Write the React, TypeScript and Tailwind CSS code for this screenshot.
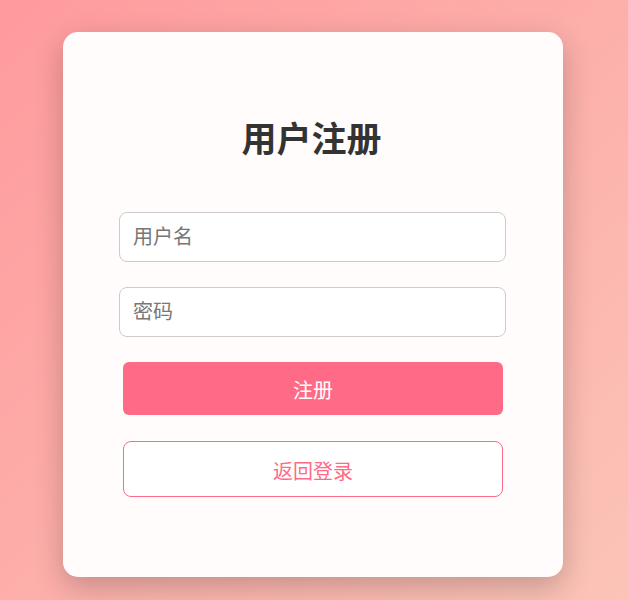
export default function App() {
  return (
    <div
      className="min-h-[600px] w-full pt-[32px] bg-[linear-gradient(135deg,#ff9a9e_0%,#fbc4b6_100%)]"
      style={{ fontFamily: '"Noto Sans CJK SC", "Noto Sans", sans-serif' }}
    >
      <div className="ml-[63px] w-[500px] h-[545px] rounded-[15px] bg-[#fffcfb] shadow-[0_10px_30px_rgba(0,0,0,0.22)] pt-[80px] flex flex-col items-center">
        <h1 className="h-[50px] leading-[50px] text-[35px] font-bold text-[#333] mb-[50px] ml-[-3px]">用户注册</h1>
        <input
          type="text"
          placeholder="用户名"
          className="w-[387px] h-[50px] px-[13px] pb-[3px] text-[20px] rounded-[8px] border border-[#ccc] bg-white outline-none placeholder:text-[#777] mb-[25px] ml-[-1px]"
        />
        <input
          type="password"
          placeholder="密码"
          className="w-[387px] h-[50px] px-[13px] pb-[3px] text-[20px] rounded-[8px] border border-[#ccc] bg-white outline-none placeholder:text-[#777] mb-[25px] ml-[-1px]"
        />
        <button className="w-[380px] h-[53px] pt-[3px] rounded-[6px] bg-[#ff6b86] text-white text-[20px] mb-[26px]">注册</button>
        <button className="w-[380px] h-[56px] pt-[3px] rounded-[8px] border border-[#ff6b86] bg-white text-[#ff6b86] text-[20px]">返回登录</button>
      </div>
    </div>
  );
}
